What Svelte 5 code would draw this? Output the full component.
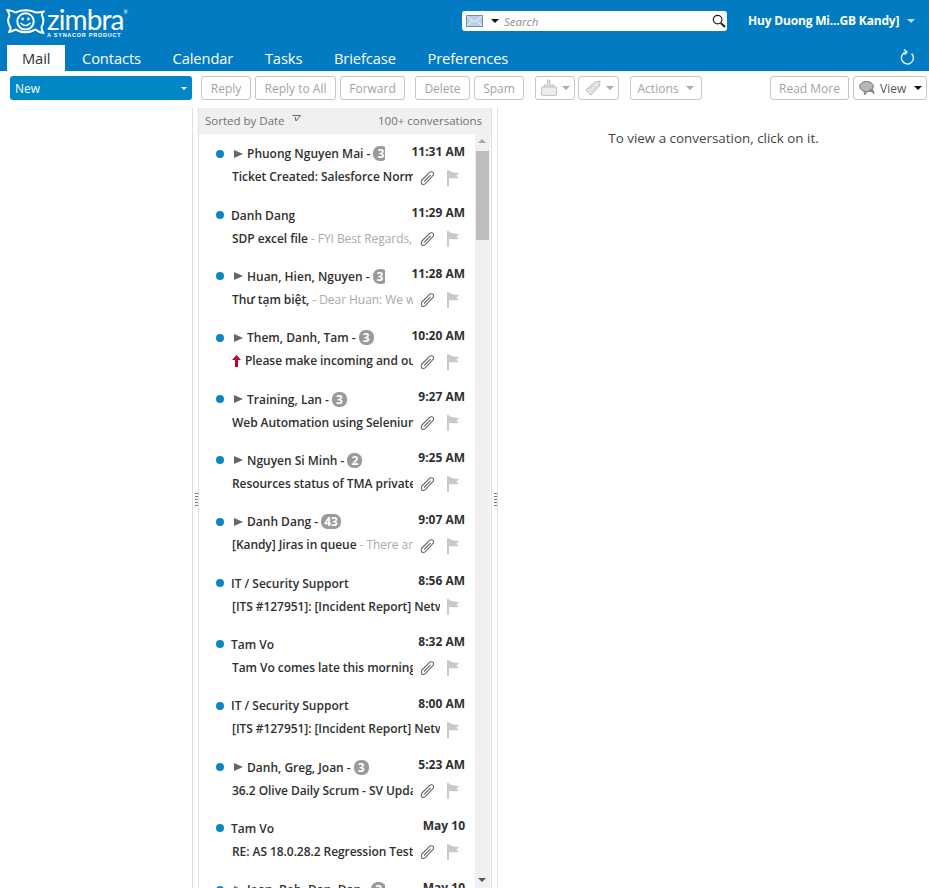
<script>
  const tabs = ['Contacts', 'Calendar', 'Tasks', 'Briefcase', 'Preferences'];
  const rows = [
    { s: 'Phuong Nguyen Mai', c: 3, t: '11:31 AM', j: 'Ticket Created: Salesforce Normal Case', clip: true, dash: true },
    { s: 'Danh Dang', t: '11:29 AM', j: 'SDP excel file', p: ' - FYI Best Regards, Danh', clip: true },
    { s: 'Huan, Hien, Nguyen', c: 3, t: '11:28 AM', j: 'Thư tạm biệt,', p: ' - Dear Huan: We wish you', clip: true, dash: true },
    { s: 'Them, Danh, Tam', c: 3, t: '10:20 AM', j: 'Please make incoming and outgoing', clip: true, dash: true, hi: true },
    { s: 'Training, Lan', c: 3, t: '9:27 AM', j: 'Web Automation using Selenium', clip: true, dash: true },
    { s: 'Nguyen Si Minh', c: 2, t: '9:25 AM', j: 'Resources status of TMA private cloud', clip: true, dash: true },
    { s: 'Danh Dang', c: 43, t: '9:07 AM', j: '[Kandy] Jiras in queue', p: ' - There are some', clip: true, dash: true },
    { s: 'IT / Security Support', t: '8:56 AM', j: '[ITS #127951]: [Incident Report] Network' },
    { s: 'Tam Vo', t: '8:32 AM', j: 'Tam Vo comes late this morning', clip: true },
    { s: 'IT / Security Support', t: '8:00 AM', j: '[ITS #127951]: [Incident Report] Network' },
    { s: 'Danh, Greg, Joan', c: 3, t: '5:23 AM', j: '36.2 Olive Daily Scrum - SV Update', clip: true, dash: true },
    { s: 'Tam Vo', t: 'May 10', j: 'RE: AS 18.0.28.2 Regression Test', clip: true },
    { s: 'Joan, Bob, Dan, Dan', c: 3, t: 'May 10', j: 'Daily status report', clip: true, dash: true }
  ];
</script>

<div class="page">
  <header class="top">
    <div class="brandbar">
      <div class="logo">
        <svg class="mark" width="39" height="25" viewBox="0 0 39 25" aria-hidden="true">
          <path d="M1 1 Q6 1.5 9.5 3.5 Q19.5 -1 30 3.5 Q34 3.4 38 2.5 Q35.5 4 36 6.5 Q39 12 35.5 18 Q35.5 21.5 37.5 24 Q33 23.5 29.5 20.5 Q19.5 26 9.5 20.5 Q6.5 22.5 3 23 Q5.5 20.5 4 17.5 Q0.5 12 3.5 6.5 Q3 3.5 1 1 Z" fill="none" stroke="#fff" stroke-width="2" stroke-linejoin="round"/>
          <circle cx="19.5" cy="12.4" r="8.2" fill="none" stroke="#fff" stroke-width="2"/>
          <circle cx="16.6" cy="10" r="1.4" fill="#fff"/>
          <circle cx="22.4" cy="10" r="1.4" fill="#fff"/>
          <path d="M14.6 14 Q19.5 19 24.4 14" fill="none" stroke="#fff" stroke-width="1.7"/>
        </svg>
        <div class="wordmark">
          <div class="zimbra">zimbra<sup>®</sup></div>
          <div class="synacor">A SYNACOR PRODUCT</div>
        </div>
      </div>
      <div class="search">
        <svg width="17" height="12" viewBox="0 0 17 12" aria-hidden="true">
          <rect x=".5" y=".5" width="16" height="11" fill="#b9cfe8" stroke="#6d8db5"/>
          <path d="M1 1 L8.5 7 L16 1 M1 11 L6 5.5 M16 11 L11 5.5" fill="none" stroke="#f1f5fb"/>
        </svg>
        <span class="blk-caret"></span>
        <span class="ph">Search</span>
        <svg class="glass" width="14" height="14" viewBox="0 0 14 14" aria-hidden="true">
          <circle cx="5.6" cy="5.6" r="4.3" fill="none" stroke="#222" stroke-width="1.2"/>
          <path d="M8.8 9 L13 13" stroke="#222" stroke-width="2"/>
        </svg>
      </div>
      <div class="user">Huy Duong Mi...GB Kandy]</div>
      <span class="user-caret"></span>
    </div>
    <nav class="tabs">
      <span class="tab active">Mail</span>
      {#each tabs as t}<span class="tab">{t}</span>{/each}
      <svg class="refresh" width="16" height="16" viewBox="0 0 16 16" aria-hidden="true">
        <path d="M12.6 4.6 A6 6 0 1 1 7.4 3" fill="none" stroke="#e4f2fb" stroke-width="1.5"/>
        <path d="M5 .4 L8 3 L5.4 5.8" fill="none" stroke="#e4f2fb" stroke-width="1.4"/>
      </svg>
    </nav>
  </header>

  <div class="toolbar">
    <div class="newbtn"><span>New</span><span class="new-caret"></span></div>
    <div class="btns">
      <span class="btn w-reply">Reply</span>
      <span class="btn w-all">Reply to All</span>
      <span class="btn w-fwd">Forward</span>
      <span class="btn w-del">Delete</span>
      <span class="btn w-spam">Spam</span>
      <span class="btn w-ico">
        <svg width="18" height="18" viewBox="0 0 18 18" aria-hidden="true">
          <path d="M7.5 1 H10 V6 H14 V8 H4 V6 H7.5 Z" fill="#e2e2e2" stroke="#c4c4c4"/>
          <path d="M1.5 8 H16.5 V15 Q16.5 16.5 15 16.5 H3 Q1.5 16.5 1.5 15 Z" fill="#ededed" stroke="#c4c4c4"/>
        </svg>
        <i class="caret"></i>
      </span>
      <span class="btn w-ico2">
        <svg width="18" height="18" viewBox="0 0 18 18" aria-hidden="true">
          <path d="M11 3 L16 2 L15.5 7 L7 16 L2 11 Z" fill="#e6e6e6" stroke="#bdbdbd"/>
          <path d="M5 11 L11 5 M7 13 L13 7" stroke="#cfcfcf"/>
        </svg>
        <i class="caret"></i>
      </span>
      <span class="btn w-act">Actions<i class="caret act"></i></span>
    </div>
    <div class="btns right">
      <span class="btn w-read">Read More</span>
      <span class="btn w-view">
        <svg width="18" height="17" viewBox="0 0 18 17" aria-hidden="true">
          <ellipse cx="7.5" cy="6.5" rx="6.8" ry="5" fill="#b7b7b7" stroke="#6f6f6f"/>
          <path d="M10 11 Q14 11.5 15 14 Q15 10.5 13 9 Z" fill="#8d8d8d" stroke="#6f6f6f" stroke-width=".7"/>
          <path d="M5 11 L5.5 15 L9 11.3" fill="#9d9d9d" stroke="#6f6f6f" stroke-width=".8"/>
        </svg>
        <span class="view-l">View</span>
        <span class="blk-caret"></span>
      </span>
    </div>
  </div>

  <main class="panes">
    <aside class="left"></aside>
    <div class="sash"><span class="grip"></span></div>
    <section class="list">
      <div class="listhead">
        <span>Sorted by Date
          <svg class="sort" width="9" height="7" viewBox="0 0 9 7" aria-hidden="true"><path d="M.5 .5 H8.5 L4 6 L3.2 2" fill="none" stroke="#555" stroke-width=".9"/></svg>
        </span>
        <span>100+ conversations</span>
      </div>
      <div class="listbody">
        <div class="rows">
          {#each rows as r}
            <article class="row">
              <div class="line1">
                <span class="dot"></span>
                {#if r.c}<span class="tri"></span>{/if}
                <span class="sender" class:flat={!r.c}>
                  {r.s}{#if r.dash}&nbsp;- {/if}{#if r.c}<b class="badge">{r.c}</b>{/if}
                </span>
                <span class="time">{r.t}</span>
              </div>
              <div class="line2" class:long={!r.clip}>
                {#if r.hi}
                  <svg class="prio" width="9" height="12" viewBox="0 0 9 12" aria-hidden="true"><path d="M4.5 0 L9 5 H6 V12 H3 V5 H0 Z" fill="#c4002a"/></svg>
                {/if}
                <span class="subj">{r.j}{#if r.p}<em>{r.p}</em>{/if}</span>
                {#if r.clip}
                  <svg class="clip" width="16" height="16" viewBox="0 0 16 16" aria-hidden="true">
                    <path d="M3 10 L10 2.8 Q12.2 1 14 2.4 Q15.4 4 13.6 6 L6.4 13.6 Q4.4 15.2 2.8 14 Q1.6 12.6 3 10 Z M5 11.6 L11.6 4.8" fill="none" stroke="#666" stroke-width="1.1"/>
                  </svg>
                {/if}
                <svg class="flag" width="13" height="16" viewBox="0 0 13 16" aria-hidden="true">
                  <path d="M1 0 V16" stroke="#b4b4b4" stroke-width="1.4"/>
                  <path d="M2 1 Q6 3 12.5 3 Q9.5 5 9.5 5.5 Q10.5 7 12 8 Q6 8.5 2 8 Z" fill="#c8c8c8"/>
                </svg>
              </div>
            </article>
          {/each}
        </div>
        <div class="scroll">
          <span class="arr up"></span>
          <span class="thumb"></span>
          <span class="arr down"></span>
        </div>
      </div>
    </section>
    <div class="sash r"><span class="grip"></span></div>
    <section class="reading">To view a conversation, click on it.</section>
  </main>
</div>

<style>
  :global(body) { margin: 0; background: #fff; }
  .page {
    width: 929px; height: 888px; overflow: hidden;
    display: flex; flex-direction: column;
    font-family: "Open Sans", "Noto Sans", sans-serif;
    font-size: 12px; color: #333;
  }
  .top { background: #027bc3; height: 71px; flex: none; display: flex; flex-direction: column; }
  .brandbar { height: 45px; display: flex; align-items: flex-start; }
  .logo { display: flex; margin: 9px 0 0 6px; width: 456px; }
  .mark { flex: none; }
  .wordmark { color: #fff; margin-left: 2px; margin-top: -3px; }
  .zimbra { font-family: "Lato", sans-serif; font-size: 28px; line-height: 27px; height: 25px; letter-spacing: -.9px; }
  .zimbra sup { font-size: 5px; vertical-align: top; line-height: 12px; }
  .synacor { font-family: "Liberation Sans", sans-serif; font-weight: bold; font-size: 5.5px; line-height: 8px; letter-spacing: .75px; white-space: nowrap; }
  .search {
    margin-top: 11px; width: 265px; height: 20px; box-sizing: border-box; padding: 0 1px 0 4px;
    background: #fff; border-radius: 3px; display: flex; align-items: center; flex: none;
  }
  .blk-caret { width: 0; height: 0; border: 4px solid transparent; border-top-color: #111; border-bottom: 0; margin-left: 8px; flex: none; }
  .ph { font-style: italic; color: #8e8e8e; font-size: 11.5px; margin-left: 5px; flex: 1; }
  .user { color: #fff; font-weight: 700; font-size: 12px; margin: 12px 0 0 21px; white-space: nowrap; letter-spacing: -.18px; width: 152px; }
  .user-caret { width: 0; height: 0; border: 4px solid transparent; border-top-color: #b9dcf2; border-bottom: 0; margin: 19px 0 0 7px; }
  .tabs { height: 26px; display: flex; align-items: stretch; padding-left: 7px; position: relative; }
  .tab { color: #fff; font-size: 14.7px; line-height: 26px; padding: 0 15.8px; letter-spacing: -.1px; white-space: nowrap; }
  .tab.active { background: #fff; color: #333; padding: 0 15px; width: 58px; box-sizing: border-box; margin-right: 1.2px; }
  .refresh { position: absolute; right: 14px; top: 4px; }
  .toolbar { height: 37px; flex: none; display: flex; align-items: flex-start; padding: 5px 2px 0 10px; box-sizing: border-box; }
  .newbtn {
    width: 182px; height: 24px; box-sizing: border-box; background: #0088c6; border-radius: 3px; color: #fff;
    font-size: 12px; font-weight: 500; display: flex; align-items: center; justify-content: space-between; padding: 0 5px;
  }
  .new-caret { width: 0; height: 0; border: 3.5px solid transparent; border-top-color: #fff; border-bottom: 0; }
  .btns { display: flex; margin-left: 9px; gap: 4px; }
  .btns.right { margin-left: auto; }
  .btn {
    height: 24px; box-sizing: border-box; border: 1px solid #c4c4c4; border-radius: 3px; color: #a3a3a3;
    font-size: 12px; display: flex; align-items: center; justify-content: center; white-space: nowrap; background: #fff;
  }
  .w-reply { width: 50px; } .w-all { width: 81px; } .w-fwd { width: 65px; }
  .w-del { width: 55px; margin-left: 6px; } .w-spam { width: 50px; }
  .w-ico { width: 40px; gap: 4px; margin-left: 7px; } .w-ico2 { width: 41px; gap: 4px; margin-left: -1px; }
  .w-act { width: 72px; margin-left: 7px; }
  .w-read { width: 79px; }
  .w-view { width: 74px; color: #555; justify-content: flex-start; padding-left: 5px; }
  .view-l { margin-left: 3px; }
  .w-view .blk-caret { margin-left: 8px; }
  .caret { display: inline-block; width: 0; height: 0; border: 4px solid transparent; border-top-color: #a9a9a9; border-bottom: 0; }
  .caret.act { margin-left: 8px; }
  .panes { flex: 1; min-height: 0; display: flex; }
  .left { width: 192px; flex: none; }
  .sash { width: 6px; flex: none; border-left: 1px solid #e0e0e0; display: flex; align-items: flex-start; justify-content: center; }
  .sash.r { border-right: 1px solid #e0e0e0; width: 5px; justify-content: flex-end; padding: 0; }
  .grip { width: 3px; height: 13px; margin-top: 385px; background: repeating-linear-gradient(#777 0 1px, transparent 1px 3px); }
  .list { width: 293px; flex: none; box-sizing: border-box; border-left: 1px solid #e0e0e0; display: flex; flex-direction: column; margin-left: -1px; }
  .listhead {
    height: 26px; flex: none; box-sizing: border-box; background: #f0f0f0; display: flex; justify-content: space-between; align-items: center;
    padding: 0 9px 2px 6px; color: #707070; font-size: 11.5px;
  }
  .sort { margin: 0 0 3px 4px; }
  .listbody { flex: 1; min-height: 0; display: flex; }
  .rows { width: 276px; flex: none; overflow: hidden; }
  .row { height: 61.35px; box-sizing: border-box; padding-top: 9.7px; }
  .line1 { height: 20px; display: flex; align-items: center; position: relative; padding-left: 17px; }
  .dot { width: 8px; height: 8px; border-radius: 50%; background: #0a86c7; flex: none; }
  .tri { width: 0; height: 0; border: 4.5px solid transparent; border-left: 9px solid #666; border-right: 0; margin-left: 10px; flex: none; }
  .sender { margin-left: 4px; max-width: 138px; overflow: hidden; white-space: nowrap; color: #2f2f2f; font-weight: 600; font-size: 12px; }
  .sender.flat { margin-left: 7px; max-width: 170px; }
  .badge {
    display: inline-block; min-width: 9px; padding: 0 3px; height: 15px; line-height: 15px; text-align: center; border-radius: 6.5px;
    background: #9a9a9a; color: #fff; font-size: 12px; font-weight: 700; margin-left: 3px;
  }
  .time { position: absolute; right: 10px; top: -2px; font-weight: 700; font-size: 12px; line-height: 20px; color: #2f2f2f; }
  .line2 { height: 20px; margin-top: 3px; display: flex; align-items: center; padding: 0 62px 0 33px; position: relative; }
  .line2.long { padding-right: 35px; }
  .prio { flex: none; margin-right: 4px; }
  .subj { flex: 1; min-width: 0; overflow: hidden; white-space: nowrap; color: #2f2f2f; font-weight: 600; font-size: 12px; letter-spacing: -.06px; }
  .subj em { font-style: normal; font-weight: 400; color: #aaa; }
  .clip { position: absolute; left: 220px; top: 3px; }
  .flag { position: absolute; left: 248px; top: 3px; }
  .scroll { width: 15px; flex: none; background: #f0f0f0; position: relative; }
  .thumb { position: absolute; left: 1px; right: 1px; top: 17px; height: 89px; background: #bdbdbd; display: block; }
  .arr { position: absolute; left: 3px; width: 0; height: 0; border: 4px solid transparent; }
  .arr.up { top: 5px; border-top: 0; border-bottom-color: #a8a8a8; }
  .arr.down { bottom: 6px; border-bottom: 0; border-top-color: #555; }
  .reading { flex: 1; text-align: center; color: #444; font-size: 13.4px; padding-top: 21px; }
</style>
